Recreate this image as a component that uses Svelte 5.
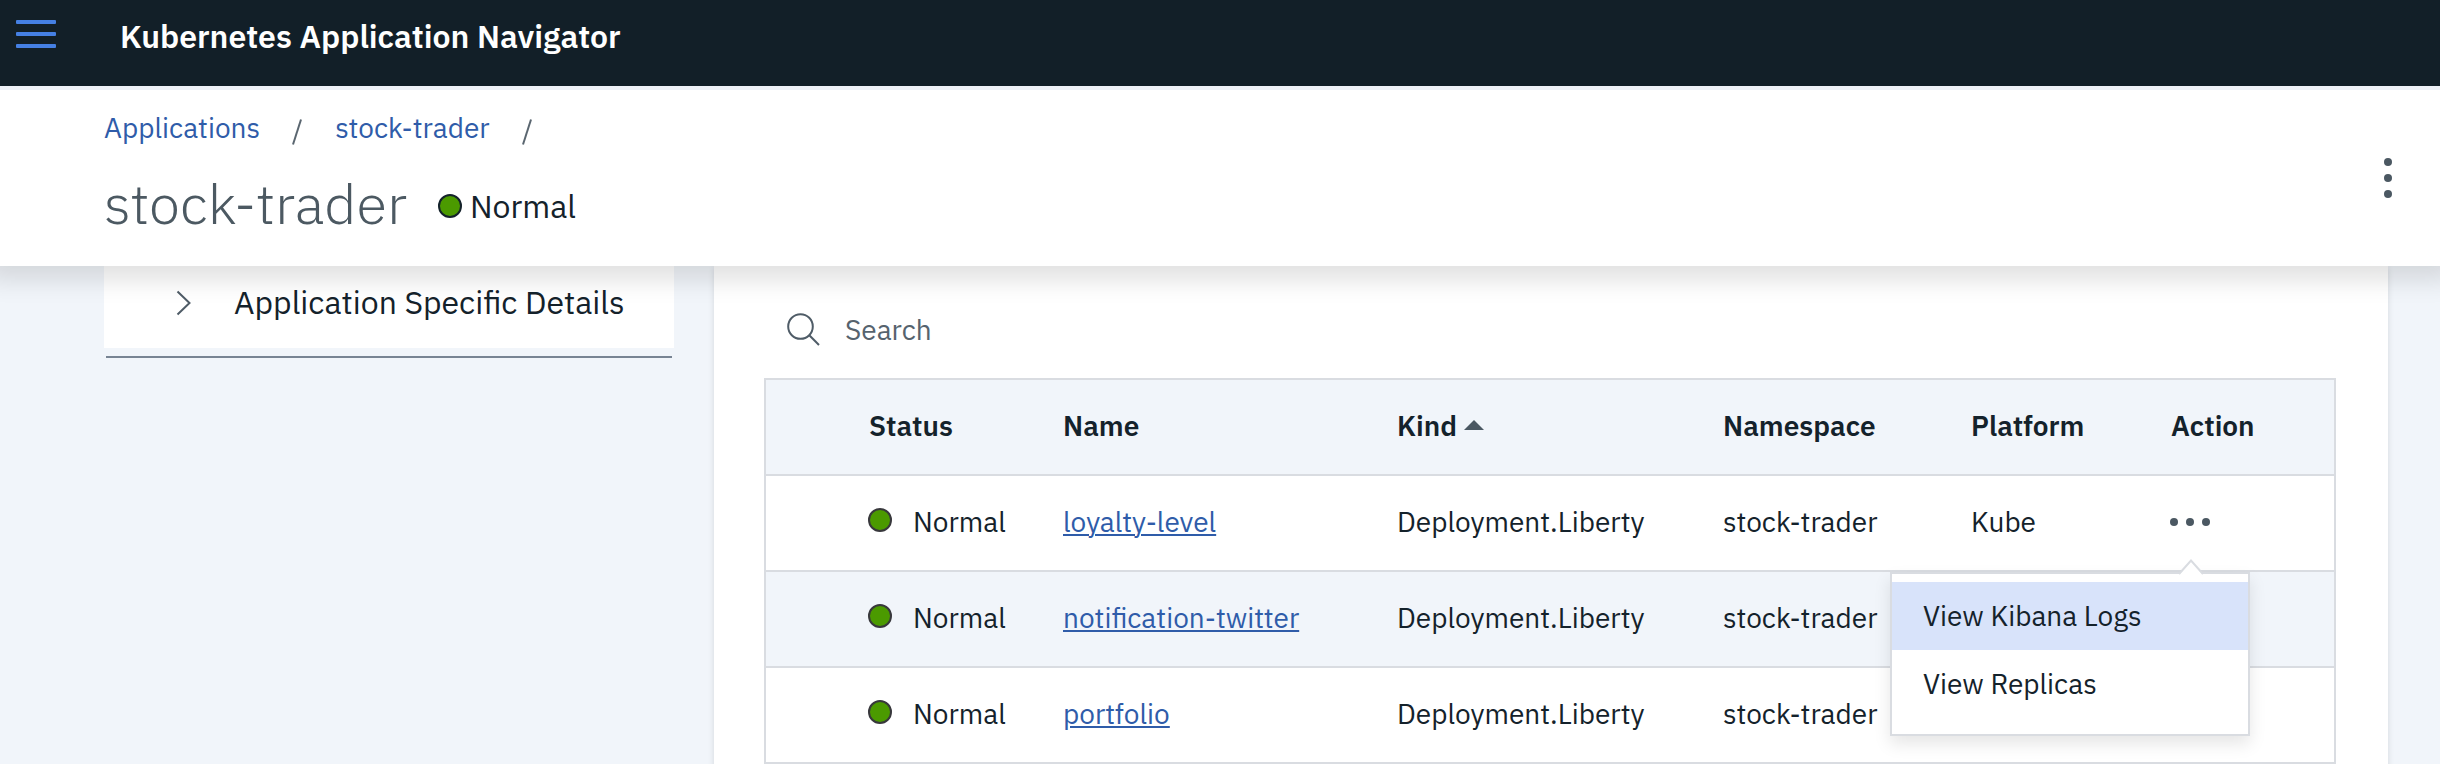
<script>
  const rows = [
    { name: 'loyalty-level', platform: 'Kube' },
    { name: 'notification-twitter', platform: '' },
    { name: 'portfolio', platform: '' }
  ];
  const columns = ['Status', 'Name', 'Kind', 'Namespace', 'Platform', 'Action'];
</script>

<div class="page">
  <header class="topbar">
    <svg class="burger" width="40" height="28" viewBox="0 0 40 28">
      <rect width="40" height="4" rx="1" /><rect y="12" width="40" height="4" rx="1" /><rect y="24" width="40" height="4" rx="1" />
    </svg>
    <h1>Kubernetes Application Navigator</h1>
  </header>

  <section class="subheader">
    <div class="heading">
      <nav>
        <a href="#apps">Applications</a>
        <svg width="10" height="26" viewBox="0 0 10 26"><path d="M9 0.5 1 25.5" /></svg>
        <a href="#trader">stock-trader</a>
        <svg width="10" height="26" viewBox="0 0 10 26"><path d="M9 0.5 1 25.5" /></svg>
      </nav>
      <div class="title">
        <h2>stock-trader</h2>
        <svg class="dot" width="24" height="24" viewBox="0 0 24 24"><circle cx="12" cy="12" r="11" /></svg>
        <span>Normal</span>
      </div>
    </div>
    <svg class="kebab" width="8" height="40" viewBox="0 0 8 40">
      <circle cx="4" cy="4" r="4" /><circle cx="4" cy="20" r="4" /><circle cx="4" cy="36" r="4" />
    </svg>
  </section>

  <main>
    <aside>
      <div class="card">
        <svg width="16" height="26" viewBox="0 0 16 26"><path d="M1.5 1.5 13.5 13 1.5 24.5" /></svg>
        <span>Application Specific Details</span>
      </div>
      <div class="rule"></div>
    </aside>

    <section class="panel">
      <div class="search">
        <svg width="34" height="34" viewBox="0 0 34 34"><circle cx="13.5" cy="13.5" r="12.3" /><path d="M22.3 22.3 32 32" /></svg>
        <span>Search</span>
      </div>
      <div class="table">
        <div class="row head">
          {#each columns as label}
            <div class="cell">
              <span>{label}</span>
              {#if label === 'Kind'}
                <svg class="sort" width="20" height="10" viewBox="0 0 20 10"><path d="M0 10 10 0 20 10Z" /></svg>
              {/if}
            </div>
          {/each}
        </div>
        {#each rows as row, i}
          <div class="row" class:alt={i % 2 === 1}>
            <div class="cell status">
              <svg class="dot" width="24" height="24" viewBox="0 0 24 24"><circle cx="12" cy="12" r="11" /></svg>
              <span>Normal</span>
            </div>
            <div class="cell"><a href="#{row.name}">{row.name}</a></div>
            <div class="cell">Deployment.Liberty</div>
            <div class="cell">stock-trader</div>
            <div class="cell">{row.platform}</div>
            <div class="cell action">
              {#if i === 0}
                <svg width="40" height="8" viewBox="0 0 40 8">
                  <circle cx="4" cy="4" r="4" /><circle cx="20" cy="4" r="4" /><circle cx="36" cy="4" r="4" />
                </svg>
                <div class="menu">
                  <svg class="caret" width="26" height="16" viewBox="0 0 26 16">
                    <path class="fill" d="M1 16 13 2 25 16Z" /><path class="edge" d="M1 15 13 1.5 25 15" />
                  </svg>
                  <div class="item active">View Kibana Logs</div>
                  <div class="item">View Replicas</div>
                </div>
              {/if}
            </div>
          </div>
        {/each}
      </div>
    </section>
  </main>
</div>

<style>
  :global(body) { background: #f1f5fa; }
  * { box-sizing: border-box; }
  .page {
    width: 2440px; height: 764px; overflow: hidden;
    display: flex; flex-direction: column;
    font-family: 'IBM Plex Sans', Roboto, sans-serif; font-size: 28px; line-height: 32px;
    color: #14222b; background: #f1f5fa; white-space: nowrap;
  }
  svg { display: block; flex: none; }
  h1, h2 { margin: 0; }
  .topbar {
    position: relative; z-index: 3;
    height: 86px; background: #121f28; flex: none;
    display: flex; align-items: flex-start; padding: 20px 0 0 16px; gap: 64px;
  }
  .burger { fill: #4580e4; }
  h1 { margin: -3px 0 0; font-size: 32px; line-height: 38px; font-weight: 600; color: #fff; }
  .subheader {
    position: relative; z-index: 2; flex: none;
    height: 180px; border-top: 4px solid #eef2f8; background: #fff;
    display: flex; justify-content: space-between; align-items: flex-start;
    padding: 0 48px 0 104px; box-shadow: 0 0 24px 14px rgba(0, 0, 0, 0.12);
  }
  nav { display: flex; align-items: flex-start; padding-top: 22px; }
  nav a { color: #2f5ca9; text-decoration: none; }
  nav svg { margin: 7px 33px 0 32px; }
  nav svg path { fill: none; stroke: #5a6670; stroke-width: 2; }
  .title { display: flex; align-items: center; margin-top: 26px; height: 64px; }
  h2 { font-size: 56px; line-height: 64px; font-weight: 300; color: #4c5962; }
  .dot circle { fill: #4b9a00; stroke: #38383c; stroke-width: 2; }
  .title .dot { margin: 6px 8px 0 31px; }
  .title .dot circle { stroke: #14222b; }
  .title span { font-size: 32px; margin-top: 6px; }
  .kebab { margin-top: 68px; }
  .kebab circle, .action circle { fill: #4b5862; }
  main { flex: 1; min-height: 0; display: flex; padding-left: 104px; }
  aside { width: 570px; margin-right: 40px; }
  .card { height: 82px; background: #fff; display: flex; align-items: center; padding: 0 0 10px 72px; }
  .card svg { margin-top: 2px; }
  .card svg path { fill: none; stroke: #4f5c67; stroke-width: 2; }
  .card span { font-size: 32px; line-height: 38px; margin-left: 42px; }
  .rule { height: 2px; margin: 8px 2px 0; background: #788493; }
  .panel { width: 1674px; height: 560px; background: #fff; padding: 0 52px 0 50px; box-shadow: 0 2px 6px rgba(0, 0, 0, 0.12); }
  .search { height: 112px; padding: 47px 0 0 23px; display: flex; align-items: flex-start; color: #56636e; }
  .search svg path, .search svg circle { fill: none; stroke: #4f5c67; stroke-width: 2; }
  .search span { margin: 1px 0 0 24px; }
  .table { border: 2px solid #d9dce1; border-bottom: 0; }
  .row {
    height: 96px; border-bottom: 2px solid #d9dce1; padding: 0 0 2px 103px;
    display: grid; grid-template-columns: 194px 334px 326px 248px 200px 1fr; align-items: center;
  }
  .head, .alt { background: #f1f5fa; }
  .head { font-weight: 600; }
  .cell { display: flex; align-items: center; }
  .sort { margin: -2px 0 0 7px; fill: #4b5862; }
  .status .dot { margin: -4px 21px 0 -1px; }
  .row a { color: #2f5ca9; text-decoration: underline; text-decoration-thickness: 2px; text-underline-offset: 2px; }
  .action { position: relative; height: 92px; }
  .action > svg { margin: 0 0 0 -1px; }
  .menu {
    position: absolute; z-index: 1; left: -281px; top: 96px; width: 360px; height: 164px;
    background: #fff; border: 2px solid #d9dce1; padding-top: 8px;
    box-shadow: 0 8px 16px rgba(0, 0, 0, 0.1);
  }
  .item { height: 68px; padding: 18px 0 0 31px; }
  .active { background: #d8e3fa; }
  .caret { position: absolute; right: 44px; top: -15px; }
  .caret .fill { fill: #fff; }
  .caret .edge { fill: none; stroke: #d9dce1; stroke-width: 2; }
</style>
